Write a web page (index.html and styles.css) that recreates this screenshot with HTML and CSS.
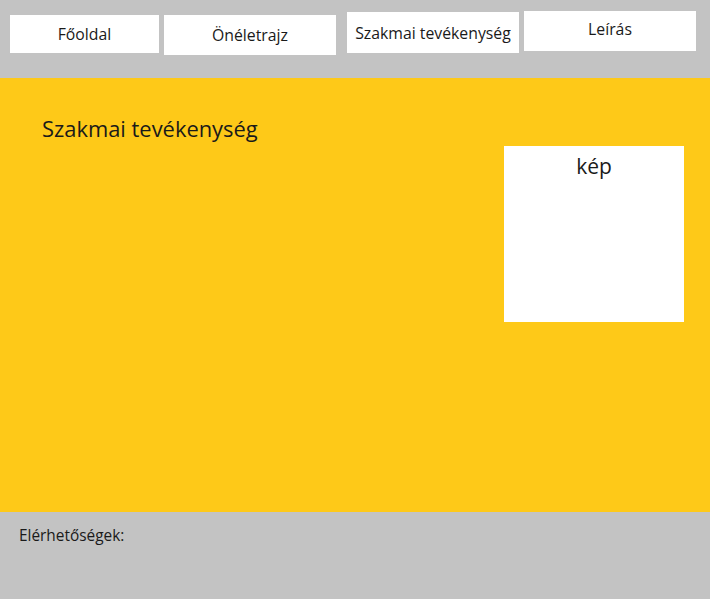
FILE: index.html
```html
<!DOCTYPE html>
<html lang="hu">
<head>
<meta charset="utf-8">
<title>Szakmai tevékenység</title>
<link rel="stylesheet" href="styles.css">
</head>
<body>
<nav class="nav">
  <a class="nav-btn btn-1" href="#">Főoldal</a>
  <a class="nav-btn btn-2" href="#">Önéletrajz</a>
  <a class="nav-btn btn-3" href="#">Szakmai tevékenység</a>
  <a class="nav-btn btn-4" href="#">Leírás</a>
</nav>
<main class="main">
  <h1 class="title">Szakmai tevékenység</h1>
  <div class="picture">kép</div>
</main>
<footer class="footer">Elérhetőségek:</footer>
</body>
</html>
```

FILE: styles.css
```css
html, body {
  margin: 0;
  padding: 0;
}
body {
  width: 710px;
  height: 599px;
  background: #c3c3c3;
  font-family: "Open Sans", "Noto Sans", sans-serif;
  color: #1a1a1a;
  overflow: hidden;
}
.nav {
  height: 78px;
  display: flex;
  align-items: flex-start;
  padding-left: 10px;
  box-sizing: border-box;
}
.nav-btn {
  display: flex;
  align-items: center;
  justify-content: center;
  background: #fff;
  color: #1a1a1a;
  text-decoration: none;
  font-size: 15.8px;
  width: 172px;
}
.btn-1 { width: 149px; height: 38px; margin-top: 15px; }
.btn-2 { height: 40px; margin-top: 15px; margin-left: 5px; }
.btn-3 { height: 41px; margin-top: 12px; margin-left: 11px; }
.btn-4 { height: 40px; margin-top: 11px; margin-left: 5px; padding-bottom: 4px; box-sizing: border-box; }
.main {
  height: 434px;
  background: #fec918;
  display: flex;
  justify-content: space-between;
  align-items: flex-start;
  padding: 0 26px 0 42px;
  box-sizing: border-box;
}
.title {
  margin: 36px 0 0;
  font-size: 21.9px;
  font-weight: 400;
}
.picture {
  margin-top: 68px;
  width: 180px;
  height: 176px;
  background: #fff;
  text-align: center;
  font-size: 21px;
  padding-top: 6px;
  box-sizing: border-box;
}
.footer {
  padding: 13px 0 0 19px;
  font-size: 15.4px;
}
```
